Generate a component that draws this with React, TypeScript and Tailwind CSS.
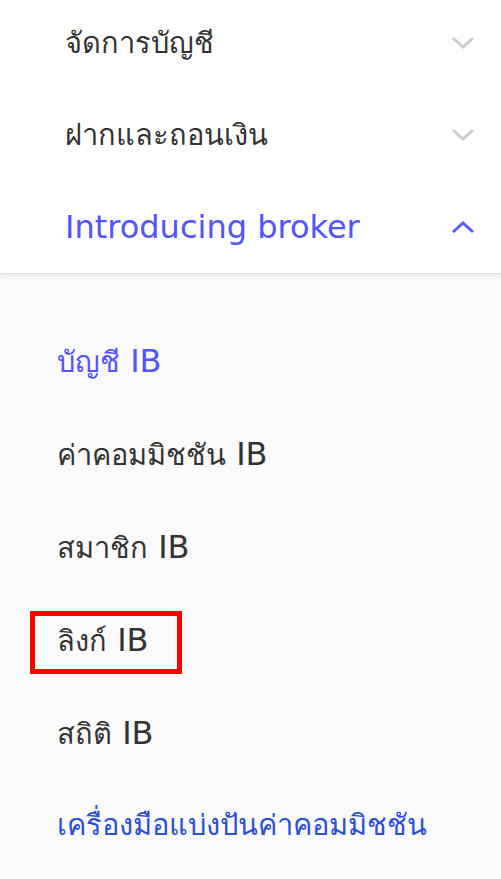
import React from "react";

const Chevron = ({ up, color }: { up?: boolean; color: string }) => (
  <svg width="24" height="14" viewBox="0 0 24 14" className="shrink-0">
    <path
      d={up ? "M2 12 L12 3 L22 12" : "M2 2 L12 11 L22 2"}
      fill="none"
      stroke={color}
      strokeWidth="3"
    />
  </svg>
);

const Mixed = ({ text }: { text: string }) => {
  const parts = text.match(/[\u0E00-\u0E7F]+|[^\u0E00-\u0E7F]+/g) || [];
  return (
    <>
      {parts.map((p, i) =>
        /[\u0E00-\u0E7F]/.test(p) ? (
          <span key={i} className="text-[29px]">
            {p}
          </span>
        ) : (
          <span key={i} className="text-[32px]">
            {p}
          </span>
        )
      )}
    </>
  );
};

export default function App() {
  const top = [
    { label: "จัดการบัญชี", open: false },
    { label: "ฝากและถอนเงิน", open: false },
    { label: "Introducing broker", open: true },
  ];
  const sub = [
    { label: "บัญชี IB", cls: "text-[#5454ff]" },
    { label: "ค่าคอมมิชชัน IB", cls: "text-[#333333]" },
    { label: "สมาชิก IB", cls: "text-[#333333]" },
    { label: "ลิงก์ IB", cls: "text-[#333333]", boxed: true },
    { label: "สถิติ IB", cls: "text-[#333333]" },
    { label: "เครื่องมือแบ่งปันค่าคอมมิชชัน", cls: "text-[#2b4fd6]" },
  ];
  return (
    <div
      className="w-[501px] h-[879px] overflow-hidden bg-[#fafafa]"
      style={{ fontFamily: 'Verdana, "DejaVu Sans", "Noto Sans", sans-serif' }}
    >
      <div className="bg-white mt-[-3px] border-b border-[#dddddd] shadow-[0_2px_4px_rgba(0,0,0,0.06)] relative">
        {top.map((t) => (
          <div
            key={t.label}
            className="h-[92px] flex items-center justify-between pl-[65px] pr-[26px]"
          >
            <span
              className={`leading-none ${t.open ? "text-[#5454ff]" : "text-[#333333]"}`}
            >
              <Mixed text={t.label} />
            </span>
            <Chevron up={t.open} color={t.open ? "#5a5aff" : "#cccccc"} />
          </div>
        ))}
      </div>
      <div className="pt-[40px] flex flex-col">
        {sub.map((s) => (
          <div
            key={s.label}
            className="relative h-[93px] flex items-center pl-[57px]"
          >
            {s.boxed && (
              <div className="absolute left-[30px] top-[18px] w-[152px] h-[63px] border-[5px] border-[#ff0000]" />
            )}
            <span className={`relative leading-none ${s.cls}`}>
              <Mixed text={s.label} />
            </span>
          </div>
        ))}
      </div>
    </div>
  );
}
